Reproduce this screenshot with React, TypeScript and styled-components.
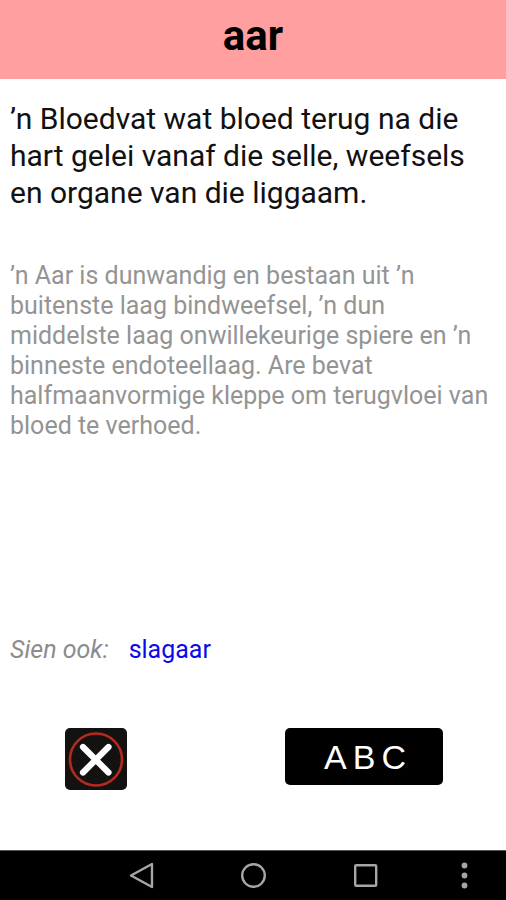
import React from "react";
import styled, { createGlobalStyle } from "styled-components";

const GlobalStyle = createGlobalStyle`
  *, *::before, *::after { box-sizing: border-box; }
  body {
    margin: 0;
    background: #fff;
    font-family: Roboto, "Liberation Sans", sans-serif;
  }
`;

const Screen = styled.div`
  display: flex;
  flex-direction: column;
  min-height: 100vh;
`;

const Header = styled.header`
  padding: 12px 10px 19px;
  background: #ff9f9f;
  text-align: center;
`;

const Term = styled.h1`
  margin: 0;
  font-size: 42px;
  line-height: 48px;
  font-weight: 700;
  color: #000;
`;

const Content = styled.main`
  flex: 1;
  display: flex;
  flex-direction: column;
  padding: 21px 10px 60px;
`;

const Paragraph = styled.p<{ $primary?: boolean }>`
  margin: 0 0 50px;
  font-size: ${(p) => (p.$primary ? 30 : 25)}px;
  line-height: ${(p) => (p.$primary ? 37 : 30)}px;
  color: ${(p) => (p.$primary ? "#111" : "#949494")};
`;

const SeeAlso = styled.div`
  display: flex;
  align-items: baseline;
  gap: 20px;
  margin-top: auto;
  font-size: 25px;
  line-height: 30px;
`;

const SeeLabel = styled.span`
  font-style: italic;
  color: #8c8c8c;
`;

const TermLink = styled.a`
  color: #0b0bea;
  text-decoration: none;
`;

const Actions = styled.div`
  display: flex;
  justify-content: space-between;
  align-items: flex-start;
  margin-top: 63px;
  padding: 0 53px 0 55px;
`;

const CloseButton = styled.button`
  width: 62px;
  height: 62px;
  padding: 0;
  border: 0;
  border-radius: 5px;
  background: #141210;
  cursor: pointer;

  svg { display: block; }
`;

const IndexButton = styled.button`
  width: 158px;
  height: 57px;
  padding: 0 0 0 8px;
  border: 0;
  border-radius: 5px;
  background: #000;
  color: #fff;
  font-family: "Liberation Sans", Arial, sans-serif;
  font-size: 34px;
  line-height: 40px;
  letter-spacing: 6px;
  cursor: pointer;
`;

const NavBar = styled.nav`
  display: grid;
  grid-template-columns: 3fr 4fr 4fr 4fr 3fr;
  height: 50px;
  border-top: 1px solid #555;
  background: #000;
`;

const NavButton = styled.button<{ $column: number }>`
  grid-column: ${(p) => p.$column};
  display: flex;
  align-items: center;
  justify-content: center;
  padding: 0;
  border: 0;
  background: none;
  color: #a6a6a6;
  cursor: pointer;
`;

const NavIcon = ({ children }: { children: React.ReactNode }) => (
  <svg width="30" height="30" viewBox="0 0 30 30" fill="none" stroke="currentColor" strokeWidth="2.4" aria-hidden="true">
    {children}
  </svg>
);

export default function App() {
  return (
    <Screen>
      <GlobalStyle />
      <Header>
        <Term>aar</Term>
      </Header>
      <Content>
        <Paragraph $primary>
          ’n Bloedvat wat bloed terug na die hart gelei vanaf die selle, weefsels en organe van die liggaam.
        </Paragraph>
        <Paragraph>
          ’n Aar is dunwandig en bestaan uit ’n buitenste laag bindweefsel, ’n dun middelste laag onwillekeurige
          spiere en ’n binneste endoteellaag. Are bevat halfmaanvormige kleppe om terugvloei van bloed te verhoed.
        </Paragraph>
        <SeeAlso>
          <SeeLabel>Sien ook:</SeeLabel>
          <TermLink href="#slagaar">slagaar</TermLink>
        </SeeAlso>
        <Actions>
          <CloseButton type="button" aria-label="Sluit">
            <svg width="62" height="62" viewBox="0 0 62 62" fill="none" aria-hidden="true">
              <circle cx="31" cy="31.5" r="26" stroke="#b32a22" strokeWidth="2.6" />
              <path d="M18 19 43.5 44.5M43.5 19 18 44.5" stroke="#fff" strokeWidth="6.2" strokeLinecap="round" />
            </svg>
          </CloseButton>
          <IndexButton type="button">ABC</IndexButton>
        </Actions>
      </Content>
      <NavBar>
        <NavButton type="button" $column={2} aria-label="Terug">
          <NavIcon><path d="M5 14.5 26 3V26Z" strokeLinejoin="round" /></NavIcon>
        </NavButton>
        <NavButton type="button" $column={3} aria-label="Tuis">
          <NavIcon><circle cx="15.5" cy="14.5" r="11.3" /></NavIcon>
        </NavButton>
        <NavButton type="button" $column={4} aria-label="Onlangs">
          <NavIcon><rect x="5.2" y="4.2" width="21" height="20.6" rx="1" /></NavIcon>
        </NavButton>
        <NavButton type="button" $column={5} aria-label="Meer">
          <NavIcon>
            <g fill="currentColor" stroke="none">
              <circle cx="15.5" cy="4.5" r="2.9" />
              <circle cx="15.5" cy="14.5" r="2.9" />
              <circle cx="15.5" cy="24.5" r="2.9" />
            </g>
          </NavIcon>
        </NavButton>
      </NavBar>
    </Screen>
  );
}
